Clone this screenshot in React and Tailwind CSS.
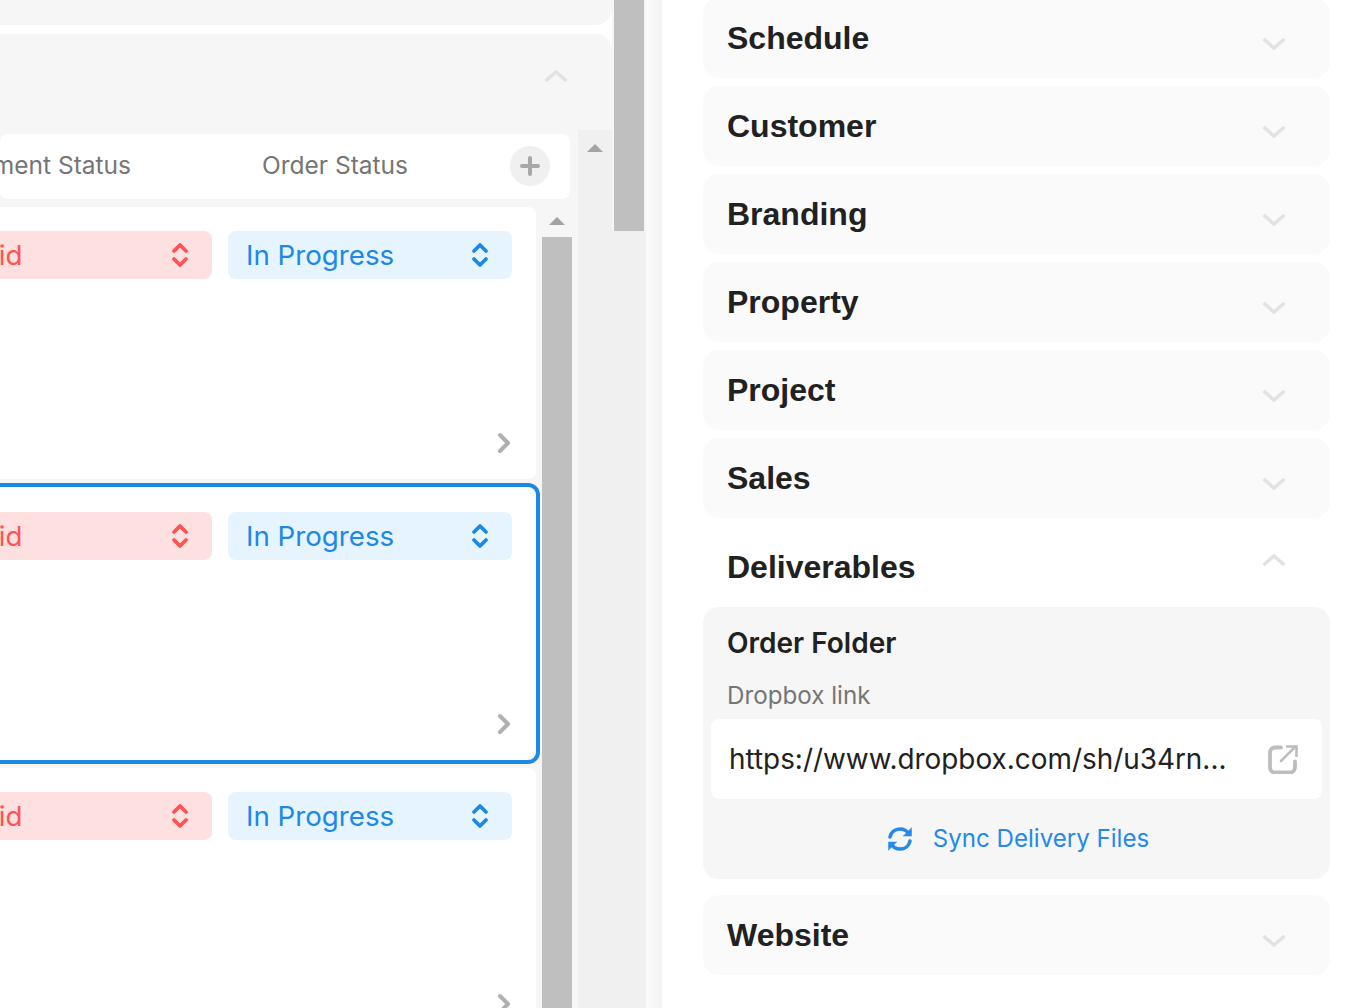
import React from "react";

const inter = "font-['Inter',sans-serif]";

const Chevron = ({ up = false, className = "" }) => (
  <svg width="24" height="14" viewBox="0 0 24 14" fill="none" className={className}>
    <path
      d={up ? "M1.5 12 12 3l10.5 9" : "M1.5 2 12 11 22.5 2"}
      stroke="#e2e2e2"
      strokeWidth="3.6"
    />
  </svg>
);

const UpDown = ({ color }) => (
  <svg width="18" height="28" viewBox="0 0 18 28" fill="none" stroke={color} strokeWidth="3.8" strokeLinecap="round" strokeLinejoin="round">
    <path d="M3 10 9 4l6 6" />
    <path d="M3 18l6 6 6-6" />
  </svg>
);

const RowArrow = () => (
  <svg width="14" height="22" viewBox="0 0 14 22" fill="none" stroke="#b0b0b0" strokeWidth="4" strokeLinecap="round" strokeLinejoin="round">
    <path d="M3 3l8 8-8 8" />
  </svg>
);

const ScrollArrow = () => (
  <div className="w-0 h-0 border-l-[8px] border-r-[8px] border-b-[8px] border-l-transparent border-r-transparent border-b-[#a3a3a3]" />
);

const StatusSelects = () => (
  <div className="flex justify-end gap-4">
    <div className="w-[301px] h-12 shrink-0 rounded-lg bg-[#ffe0e0] flex items-center justify-between pl-[18px] pr-[23px] text-[#ff5252] text-[27.7px]">
      <span className="pt-[2px]">Unpaid</span>
      <UpDown color="#ff5252" />
    </div>
    <div className="w-[284px] h-12 shrink-0 rounded-lg bg-[#e5f4fe] flex items-center justify-between pl-[18px] pr-[23px] text-[#1e88e5] text-[27.7px]">
      <span className="pt-[2px]">In Progress</span>
      <UpDown color="#1e88e5" />
    </div>
  </div>
);

const OrderRow = ({ selected }) =>
  selected ? (
    <div className="bg-white rounded-r-xl border-4 border-[#1e88e5] border-l-0 pt-[25px] pb-[25px] pr-6 -mr-1">
      <StatusSelects />
      <div className="flex justify-end mt-[153px] mr-[1px]">
        <RowArrow />
      </div>
    </div>
  ) : (
    <div className="bg-white rounded-r-lg pt-6 pb-[25px] pr-6">
      <StatusSelects />
      <div className="flex justify-end mt-[153px] mr-[1px]">
        <RowArrow />
      </div>
    </div>
  );

const SectionTitle = ({ children }) => (
  <h3 className="font-['Liberation_Sans',sans-serif] font-bold text-[32px] leading-none text-[#212121] self-center">{children}</h3>
);

const Section = ({ title, first }) => (
  <div className={`bg-[#fafafa] rounded-2xl h-20 px-6 flex justify-between shrink-0 ${first ? "-mt-[2px]" : ""}`}>
    <SectionTitle>{title}</SectionTitle>
    <Chevron className="mt-[39px] mr-5" />
  </div>
);

export default function App() {
  return (
    <div className={`${inter} w-[1356px] h-[1008px] overflow-hidden flex bg-white`}>
      {/* orders pane */}
      <div className="w-[646px] shrink-0 h-full flex overflow-hidden">
        <div className="w-[612px] shrink-0 flex flex-col">
          <div className="h-[25px] shrink-0 bg-[#f6f6f6] rounded-br-2xl" />
          <div className="mt-[9px] flex-1 bg-[#f6f6f6] rounded-tr-2xl flex flex-col min-h-0">
            <div className="h-24 shrink-0 flex justify-end pt-[35px] pr-[44px]">
              <Chevron up />
            </div>
            <div className="flex-1 flex min-h-0">
              <div className="w-[578px] shrink-0 pt-1">
                <div className="w-[570px] h-[65px] bg-white rounded-lg flex items-center justify-between pr-5 text-[24.5px] text-[#757575]">
                  <div className="flex gap-[131px] -ml-[50px] mb-[2px]">
                    <span className="whitespace-nowrap">Payment Status</span>
                    <span className="whitespace-nowrap">Order Status</span>
                  </div>
                  <div className="w-10 h-10 -mt-[1px] rounded-full bg-[#f0f0f0] flex items-center justify-center">
                    <svg width="20" height="20" viewBox="0 0 20 20" stroke="#a8a8a8" strokeWidth="4" strokeLinecap="round">
                      <path d="M10 2v16M2 10h16" />
                    </svg>
                  </div>
                </div>
                <div className="flex mt-2 w-[574px]">
                  <div className="w-[536px] shrink-0 flex flex-col gap-1">
                    <OrderRow />
                    <OrderRow selected />
                    <OrderRow />
                  </div>
                  <div className="ml-1 -mt-1 w-[34px] shrink-0 bg-[#f6f6f6] flex flex-col items-center">
                    <div className="h-[34px] w-full pt-[2px] flex items-center justify-center">
                      <ScrollArrow />
                    </div>
                    <div className="w-[30px] h-[800px] bg-[#bfbfbf]" />
                  </div>
                </div>
              </div>
              <div className="flex-1 bg-[#f0f0f0] flex justify-center pt-[14px]">
                <ScrollArrow />
              </div>
            </div>
          </div>
        </div>
        <div className="w-[34px] shrink-0 flex flex-col bg-[#f0f0f0]">
          <div className="h-[231px] shrink-0 px-[2px] bg-[#f6f6f6]">
            <div className="w-[30px] h-full bg-[#bfbfbf]" />
          </div>
        </div>
      </div>
      {/* shadow between the panes */}
      <div className="w-4 shrink-0 bg-gradient-to-r from-[#fbfbfb] to-[#f2f2f2]" />
      {/* details pane */}
      <div className="flex-1 pl-[41px] pr-[26px] flex flex-col gap-2">
        {["Schedule", "Customer", "Branding", "Property", "Project", "Sales"].map((t, i) => (
          <Section key={t} title={t} first={i === 0} />
        ))}
        <div className="h-[81px] shrink-0 px-6 flex justify-between">
          <SectionTitle>Deliverables</SectionTitle>
          <Chevron up className="mt-[27px] mr-5" />
        </div>
        <div className="-mt-2 bg-[#f6f6f6] rounded-2xl h-[272px] shrink-0 px-2 pt-[19px]">
          <div className="px-4 text-[28px] leading-[34px] font-semibold text-[#212121]">Order Folder</div>
          <div className="px-4 mt-[20px] text-[24.2px] leading-[32px] text-[#757575]">Dropbox link</div>
          <div className="mt-[7px] h-20 bg-white rounded-lg flex items-center justify-between pl-[18px] pr-[24px]">
            <span className="pt-[2px] text-[27.9px] text-[#212121]">https://www.dropbox.com/sh/u34rn...</span>
            <svg width="30" height="30" viewBox="0 0 30 30" fill="none" stroke="#bdbdbd" strokeWidth="3.8">
              <path d="M13 3.5H7a5 5 0 0 0-5 5v15a5 5 0 0 0 5 5h15a5 5 0 0 0 5-5v-6" strokeLinecap="round" />
              <path d="M13 17 27.5 2.5" strokeWidth="2.6" strokeLinecap="round" />
              <path d="M18 2.5h10.5V13" strokeWidth="2.6" />
            </svg>
          </div>
          <div className="mt-[20px] pl-[3px] flex items-center justify-center gap-5 text-[#2589e9] text-[24.1px] leading-[40px]">
            <svg width="26" height="26" viewBox="0 0 26 26" fill="none" stroke="#2589e9" strokeWidth="3.6" strokeLinecap="round">
              <path d="M3 11C4 6 8 3 13 3c4 0 7 2 9 5" />
              <path d="M23 15c-1 5-5 8-10 8-4 0-7-2-9-5" />
              <path d="M24.5 2v8h-8z" fill="#2589e9" strokeWidth="0.5" />
              <path d="M1.5 24v-8h8z" fill="#2589e9" strokeWidth="0.5" />
            </svg>
            <span>Sync Delivery Files</span>
          </div>
        </div>
        <div className="mt-2 bg-[#fafafa] rounded-2xl h-20 px-6 flex justify-between shrink-0">
          <SectionTitle>Website</SectionTitle>
          <Chevron className="mt-[39px] mr-5" />
        </div>
      </div>
    </div>
  );
}
